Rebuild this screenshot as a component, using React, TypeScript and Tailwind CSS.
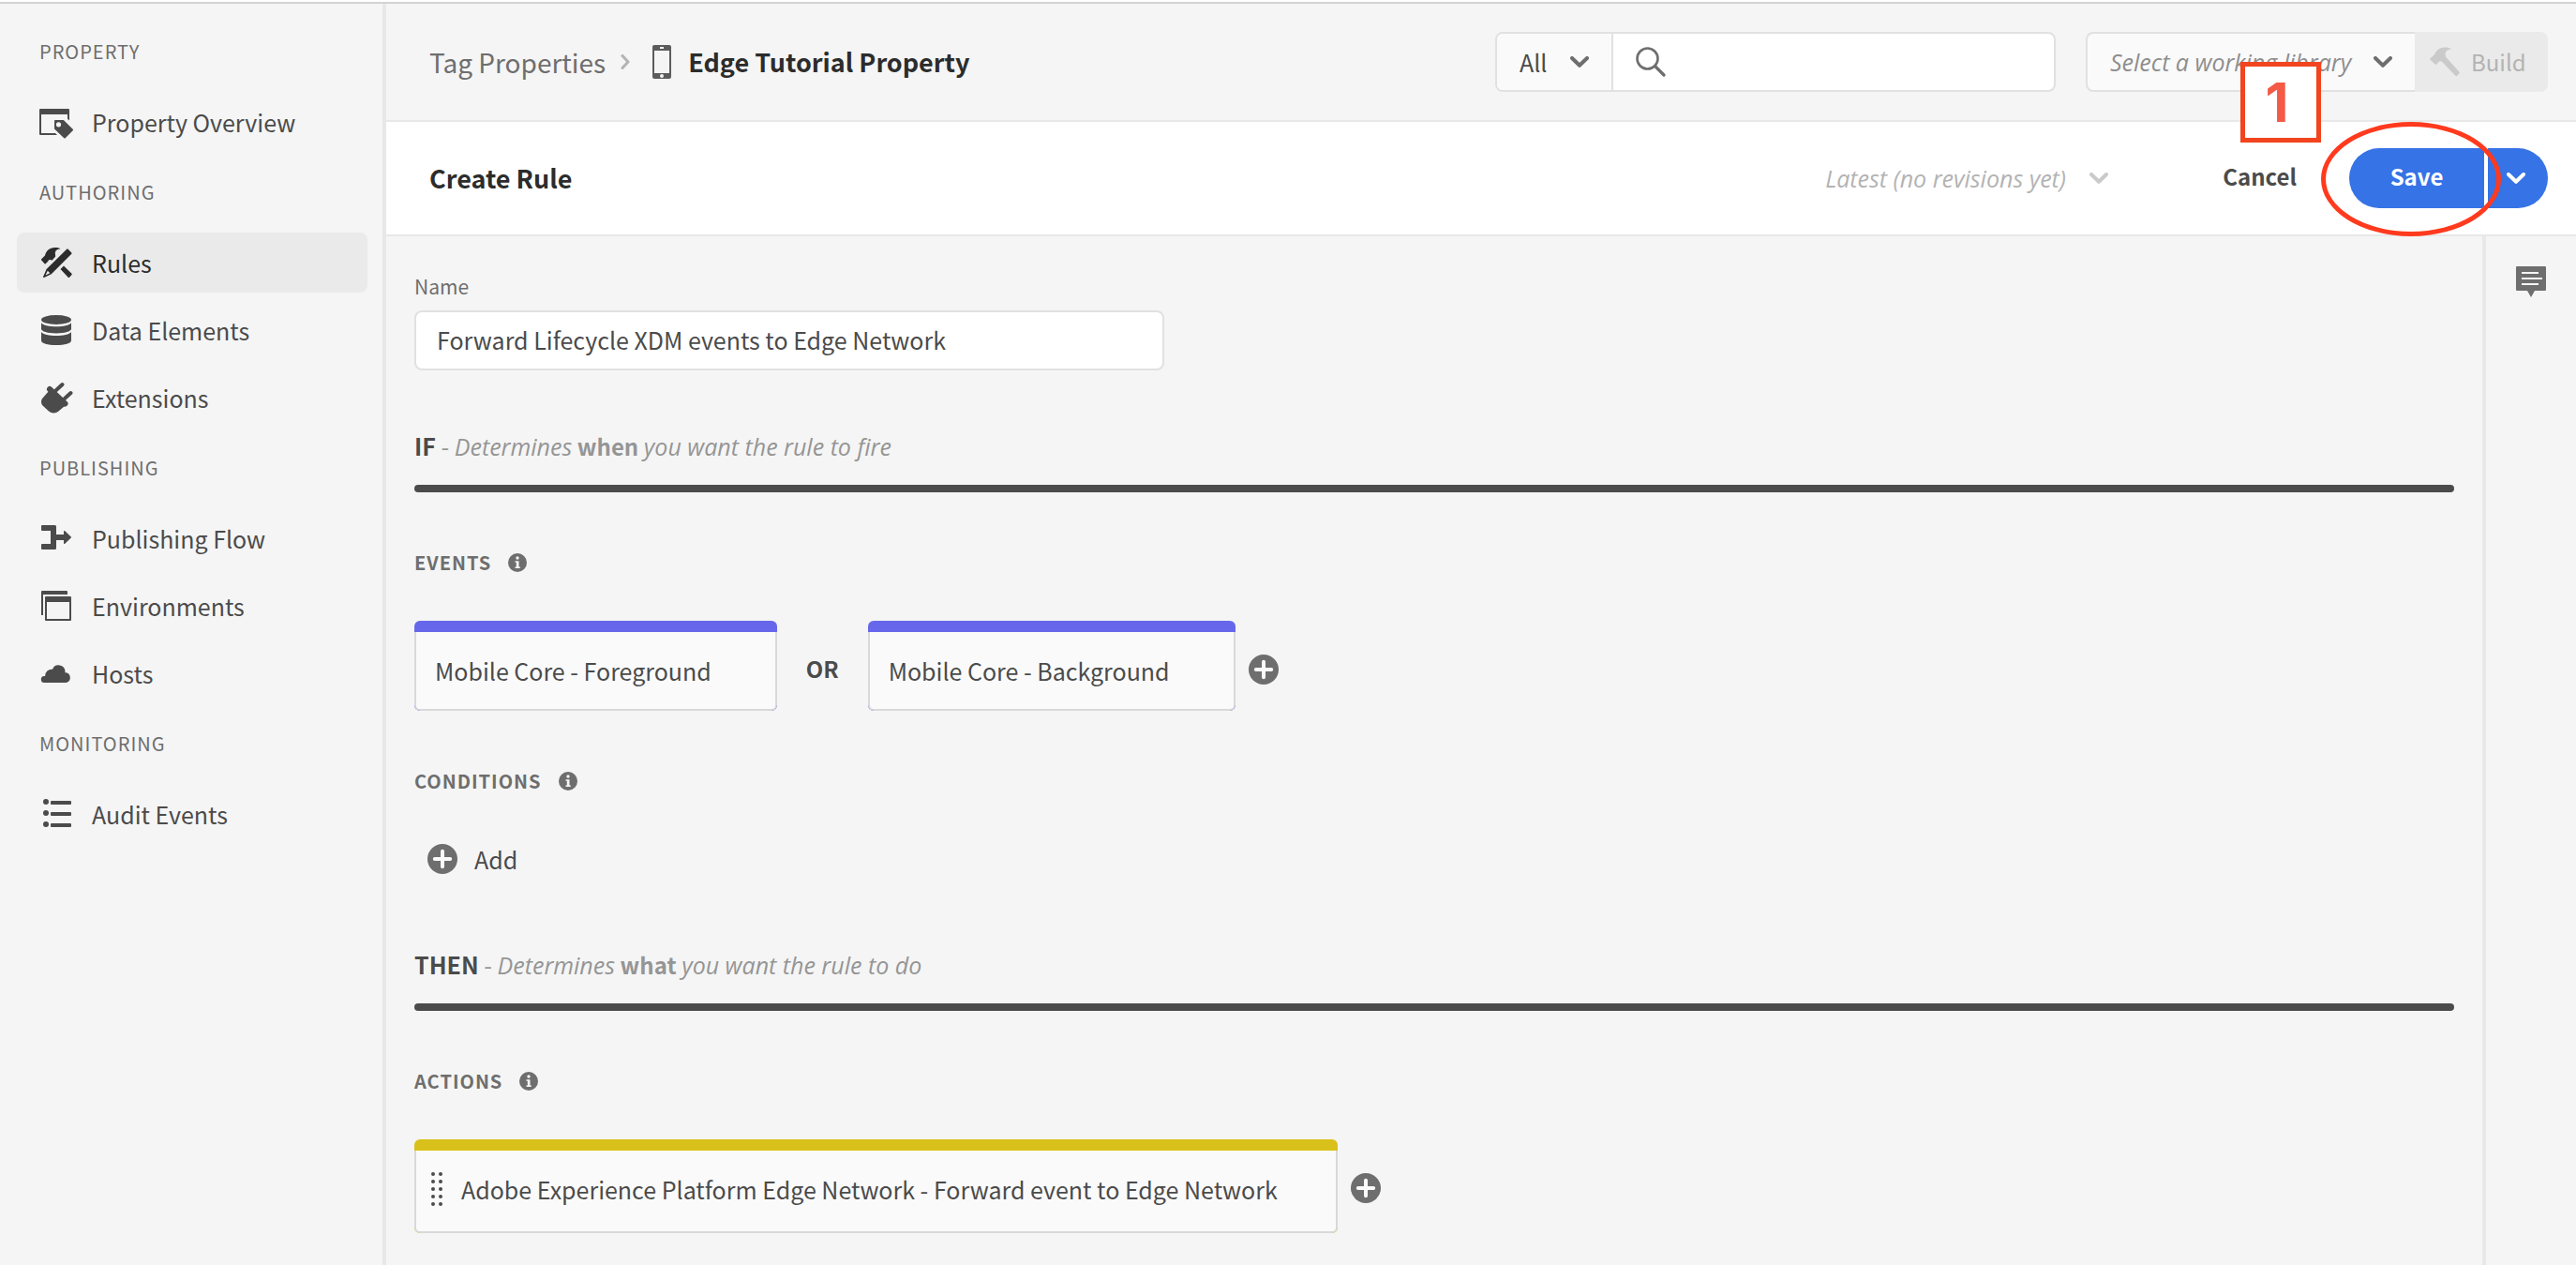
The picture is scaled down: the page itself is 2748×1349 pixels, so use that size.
import type { ReactNode } from "react";

type IconProps = { className?: string };

function Glyph({ className = "size-9", children }: { className?: string; children: ReactNode }) {
  return (
    <svg viewBox="0 0 36 36" className={`shrink-0 ${className}`} fill="currentColor" aria-hidden="true">
      {children}
    </svg>
  );
}

const PropertyIcon = () => (
  <Glyph>
    <path d="M1 4h30a1 1 0 0 1 1 1v11.500l-2-1.800V10H2v20h15l2 2H1a1 1 0 0 1-1-1V5a1 1 0 0 1 1-1z" />
    <path
      fillRule="evenodd"
      d="M17 16h8.400a1 1 0 0 1 .7.300l9.600 9.500a1 1 0 0 1 0 1.400l-8 8a1 1 0 0 1-1.400 0l-10-9.500a1 1 0 0 1-.3-.7V17a1 1 0 0 1 1-1zm3.500 2.200a2.600 2.600 0 1 0 0 5.200 2.600 2.600 0 0 0 0-5.200z"
    />
  </Glyph>
);

const RulesIcon = () => (
  <Glyph>
    <path d="M2.200 14.200 6 10.500C7 6 10.500 2 16.500 2c2.700 0 4.800.3 6 1.300-3 .2-5.500 1.700-5.700 4.400l.4 3.800-3.700 4.200-1.500-.7-2 .2-.6 1.400-2.700 2.700a.8.800 0 0 1-1.100 0l-3.400-3.900a.8.800 0 0 1 0-1.200z" />
    <path d="m26 21.500 8.500 8.200a1 1 0 0 1 0 1.400l-2.400 2.600a1 1 0 0 1-1.400 0l-8.200-8.700z" />
    <path
      fillRule="evenodd"
      d="m30.700 3.800 3.600 3.600a1 1 0 0 1 0 1.400L12.800 30.300 5 33.900a.7.700 0 0 1-.9-.9l3.500-7.900L29.200 3.800a1 1 0 0 1 1.500 0zM8.800 26.700l-2.300 4.800 4.800-2.200z"
    />
  </Glyph>
);

const DataIcon = () => (
  <Glyph>
    <ellipse cx="18" cy="7" rx="16" ry="5" />
    <path d="M2 10.200c2 2.600 8.500 4 16 4s14-1.400 16-4v6.600c0 2.600-7 4.700-16 4.700S2 19.400 2 16.800z" />
    <path d="M2 19.900c2 2.600 8.500 4.100 16 4.100s14-1.500 16-4.100v9.300c0 2.700-7 4.800-16 4.800S2 31.900 2 29.200z" />
  </Glyph>
);

const PlugIcon = () => (
  <Glyph>
    <path d="M10.500 10.500 27 27l-6.500 5.500a8 8 0 0 1-10.500 0L3.500 26.500a6 6 0 0 1 0-8z" />
    <path d="M11 9 27.500 24.500" stroke="currentColor" strokeWidth="6" strokeLinecap="round" />
    <path d="m18 10 6.500-6M27 19l6.500-6" stroke="currentColor" strokeWidth="4" strokeLinecap="round" />
  </Glyph>
);

const FlowIcon = () => (
  <Glyph>
    <path d="M3 4h13.500A1.500 1.500 0 0 1 18 5.500V14h8v-3.200a.8.800 0 0 1 1.300-.6l6.500 6.200a.8.800 0 0 1 0 1.200l-6.500 6.200a.8.800 0 0 1-1.300-.6V20h-8v8.500a1.500 1.500 0 0 1-1.500 1.500H3a1 1 0 0 1-1-1v-4a1 1 0 0 1 1-1h9V10H3a1 1 0 0 1-1-1V5a1 1 0 0 1 1-1z" />
  </Glyph>
);

const EnvironmentsIcon = () => (
  <Glyph>
    <path d="M3 2h26a1 1 0 0 1 1 1v3H4v22H2V3a1 1 0 0 1 1-1z" />
    <path
      fillRule="evenodd"
      d="M7 8h26a1 1 0 0 1 1 1v24a1 1 0 0 1-1 1H7a1 1 0 0 1-1-1V9a1 1 0 0 1 1-1zm1 6v18h24V14z"
    />
  </Glyph>
);

const CloudIcon = () => (
  <Glyph>
    <path d="M5.500 28a3.500 3.500 0 0 1-.4-7h1a7 7 0 0 1 7.900-7.300A7 7 0 0 1 27.500 16v1.200A5.500 5.500 0 0 1 28.800 28z" />
  </Glyph>
);

const AuditIcon = () => (
  <Glyph>
    <circle cx="7" cy="5" r="3" />
    <circle cx="7" cy="17" r="3" />
    <circle cx="7" cy="29" r="3" />
    <rect x="12" y="4" width="22" height="4" rx="1" />
    <rect x="12" y="16" width="22" height="4" rx="1" />
    <rect x="12" y="28" width="22" height="4" rx="1" />
  </Glyph>
);

const PhoneIcon = () => (
  <svg viewBox="0 0 20 36" className="h-9 w-5 shrink-0 text-[#5c5c5c]" fill="currentColor" aria-hidden="true">
    <path
      fillRule="evenodd"
      d="M2 0h16a2 2 0 0 1 2 2v32a2 2 0 0 1-2 2H2a2 2 0 0 1-2-2V2a2 2 0 0 1 2-2zm0 6v24h16V6zm6-4v2h4V2zm2 29a2 2 0 1 0 0 4 2 2 0 0 0 0-4z"
    />
  </svg>
);

const Chevron = ({ className = "" }: IconProps) => (
  <svg viewBox="0 0 20 12" className={`h-3 w-5 shrink-0 ${className}`} fill="none" aria-hidden="true">
    <path d="m2 2 8 7.800L18 2" stroke="currentColor" strokeWidth="4" strokeLinecap="round" strokeLinejoin="round" />
  </svg>
);

const InfoIcon = () => (
  <svg viewBox="0 0 20 20" className="size-5 shrink-0" fill="currentColor" aria-hidden="true">
    <circle cx="10" cy="10" r="10" />
    <g className="fill-[#f5f5f5]">
      <circle cx="10" cy="5" r="1.700" />
      <path d="M7.500 8.200h4v6.200h1.300v1.600H7.500v-1.600h1.300V9.800H7.500z" />
    </g>
  </svg>
);

const PlusIcon = () => (
  <svg viewBox="0 0 32 32" className="size-8 shrink-0 text-[#6e6e6e]" aria-hidden="true">
    <circle cx="16" cy="16" r="16" fill="currentColor" />
    <path d="M16 7.800v16.400M7.800 16h16.400" className="stroke-[#fafafa]" strokeWidth="4" strokeLinecap="round" />
  </svg>
);

const SearchIcon = () => (
  <svg viewBox="0 0 32 32" className="size-8 shrink-0 text-[#6e6e6e]" fill="none" stroke="currentColor" aria-hidden="true">
    <circle cx="12.500" cy="12.500" r="11" strokeWidth="2.600" />
    <path d="m20.500 20.500 9.500 9.500" strokeWidth="3.200" strokeLinecap="round" />
  </svg>
);

const HammerIcon = () => (
  <svg viewBox="0 0 32 32" className="size-8 shrink-0" fill="currentColor" aria-hidden="true">
    <path d="M.3 12.500 5 8.200C7 3.500 10.500.500 16 .500c3 0 5.500.5 7 2-3.500.2-6 1.500-6.500 4.500l.4 3.500 14.600 16.200a1.200 1.200 0 0 1 0 1.600l-2.400 2.400a1.200 1.200 0 0 1-1.700 0L12.800 15.500l-2.600-.3-1 1.300-2.200 2.300a.8.800 0 0 1-1.200 0L.3 13.600a.8.800 0 0 1 0-1.100z" />
  </svg>
);

const CommentIcon = () => (
  <svg viewBox="0 0 32 34" className="h-[34px] w-8 text-[#6e6e6e]" fill="currentColor" aria-hidden="true">
    <path d="M1 0h30a1 1 0 0 1 1 1v24a1 1 0 0 1-1 1H20l-4 7-4-7H1a1 1 0 0 1-1-1V1a1 1 0 0 1 1-1z" />
    <path d="M6 7h18M6 13h22M6 19h18" className="stroke-[#f5f5f5]" strokeWidth="2" />
  </svg>
);

const GripIcon = () => (
  <svg viewBox="0 0 12 36" className="h-9 w-3 shrink-0 text-[#4b4b4b]" fill="currentColor" aria-hidden="true">
    {[2, 10, 18, 26, 34].map((y) => (
      <g key={y}>
        <circle cx="2" cy={y} r="2" />
        <circle cx="10" cy={y} r="2" />
      </g>
    ))}
  </svg>
);

const navigation: { title: string; items: { label: string; icon: ReactNode; active?: boolean }[] }[] = [
  { title: "PROPERTY", items: [{ label: "Property Overview", icon: <PropertyIcon /> }] },
  {
    title: "AUTHORING",
    items: [
      { label: "Rules", icon: <RulesIcon />, active: true },
      { label: "Data Elements", icon: <DataIcon /> },
      { label: "Extensions", icon: <PlugIcon /> },
    ],
  },
  {
    title: "PUBLISHING",
    items: [
      { label: "Publishing Flow", icon: <FlowIcon /> },
      { label: "Environments", icon: <EnvironmentsIcon /> },
      { label: "Hosts", icon: <CloudIcon /> },
    ],
  },
  { title: "MONITORING", items: [{ label: "Audit Events", icon: <AuditIcon /> }] },
];

function Sidebar() {
  return (
    <nav aria-label="Property" className="w-[412px] shrink-0 border-r-4 border-[#e8e8e8] pt-2 pr-4 pl-[18px]">
      {navigation.map((group) => (
        <section key={group.title}>
          <h2 className="flex h-[86px] items-center pl-6 text-[20px] tracking-wider text-[#6e6e6e]">{group.title}</h2>
          <ul className="flex flex-col gap-2">
            {group.items.map((item) => (
              <li key={item.label}>
                <a
                  href="#"
                  aria-current={item.active ? "page" : undefined}
                  className={
                    item.active
                      ? "flex h-16 items-center gap-5 rounded-lg bg-[#eaeaea] pl-6 text-[#2c2c2c]"
                      : "flex h-16 items-center gap-5 rounded-lg pl-6 text-[#4b4b4b]"
                  }
                >
                  {item.icon}
                  {item.label}
                </a>
              </li>
            ))}
          </ul>
        </section>
      ))}
    </nav>
  );
}

function TopBar() {
  return (
    <header className="flex h-[126px] items-center border-b-2 border-[#e8e8e8] pr-[30px] pl-[46px]">
      <div className="flex items-center text-[28px]">
        <a href="#" className="text-[#6e6e6e]">
          Tag Properties
        </a>
        <svg viewBox="0 0 10 16" className="mr-6 ml-4 h-4 w-2.5 text-[#b3b3b3]" fill="none" aria-hidden="true">
          <path d="m2 1.500 6 6.500-6 6.500" stroke="currentColor" strokeWidth="3" strokeLinecap="round" strokeLinejoin="round" />
        </svg>
        <PhoneIcon />
        <span className="ml-[18px] text-[27px] font-bold text-[#2c2c2c]">Edge Tutorial Property</span>
      </div>
      <div className="ml-auto flex h-16 w-[598px] overflow-hidden rounded-lg border-2 border-[#e1e1e1] bg-white">
        <div className="relative w-[124px] border-r-2 border-[#e1e1e1] bg-[#fafafa]">
          <select aria-label="Search scope" className="size-full appearance-none pl-6 text-[#4b4b4b]">
            <option>All</option>
          </select>
          <Chevron className="pointer-events-none absolute top-6 right-6 text-[#6e6e6e]" />
        </div>
        <label className="flex flex-1 items-center gap-3 pl-6">
          <SearchIcon />
          <input type="search" aria-label="Search" className="h-full min-w-0 flex-1 outline-none" />
        </label>
      </div>
      <div className="ml-8 flex h-16">
        <div className="relative w-[351px] rounded-l-lg border-2 border-r-0 border-[#e1e1e1] bg-[#fafafa]">
          <select
            aria-label="Working library"
            className="size-full appearance-none pl-6 font-['Open_Sans',sans-serif] text-[#8e8e8e] italic"
          >
            <option>Select a working library</option>
          </select>
          <Chevron className="pointer-events-none absolute top-6 right-6 text-[#6e6e6e]" />
        </div>
        <button
          type="button"
          disabled
          className="flex w-[142px] items-center gap-3 rounded-r-lg bg-[#eaeaea] pl-4 text-[24px] text-[#b3b3b3]"
        >
          <span className="text-[#cacaca]">
            <HammerIcon />
          </span>
          Build
        </button>
      </div>
    </header>
  );
}

function RuleBar() {
  return (
    <div className="relative flex h-[122px] items-center border-b-2 border-[#e8e8e8] bg-white pr-[30px] pl-[46px]">
      <h1 className="text-[27px] font-bold text-[#2c2c2c]">Create Rule</h1>
      <div className="relative ml-auto w-[302px]">
        <select
          aria-label="Revision"
          className="block h-16 w-full appearance-none font-['Open_Sans',sans-serif] text-[#b3b3b3] italic"
        >
          <option>Latest (no revisions yet)</option>
        </select>
        <Chevron className="pointer-events-none absolute top-[26px] right-0 text-[#cacaca]" />
      </div>
      <button type="button" className="mr-14 ml-[122px] h-16 pb-1 text-[24px] font-bold text-[#4b4b4b]">
        Cancel
      </button>
      <div className="flex h-16 gap-1 text-white">
        <button type="button" className="w-36 rounded-l-full bg-[#3573e6] pb-1 text-[24px] font-bold">
          Save
        </button>
        <button
          type="button"
          aria-label="More save options"
          className="flex w-16 items-center justify-center rounded-r-full bg-[#3573e6] pr-1"
        >
          <Chevron />
        </button>
      </div>
      <div className="pointer-events-none absolute top-0 right-20 h-[122px] w-[192px] rounded-[50%] border-[5px] border-[#ff3a1e]" />
      <div className="pointer-events-none absolute top-[-64px] right-[272px] flex h-[86px] w-[86px] items-center justify-center border-[5px] border-[#f2441e] bg-white pr-2 font-['Inter',sans-serif] text-[58px] font-bold text-[#f45a46]">
        1
      </div>
    </div>
  );
}

function ClauseHeading({ keyword, emphasis, rest }: { keyword: string; emphasis: string; rest: string }) {
  return (
    <div className="mb-[60px]">
      <h2 className="h-9 leading-9 text-[#959595]">
        <b className="text-[#4b4b4b]">{keyword}</b> - <em className="font-['Open_Sans',sans-serif]">Determines</em>{" "}
        <b className="text-[24px]">{emphasis}</b> <em className="font-['Open_Sans',sans-serif]">{rest}</em>
      </h2>
      <div className="mt-6 h-2 rounded bg-[#4b4b4b]" />
    </div>
  );
}

function GroupHeading({ children }: { children: ReactNode }) {
  return (
    <h3 className="flex items-center gap-[18px] text-[20px] leading-[30px] font-bold tracking-wider text-[#6e6e6e]">
      {children}
      <InfoIcon />
    </h3>
  );
}

function AddButton({ label }: { label: string }) {
  return (
    <button type="button" aria-label={label} className="mt-9 ml-3.5 self-start">
      <PlusIcon />
    </button>
  );
}

function EventCard({ children }: { children: ReactNode }) {
  return (
    <button type="button" className="flex h-24 flex-col overflow-hidden rounded-md bg-[#6767ec] pt-3 text-left">
      <span className="flex flex-1 items-center rounded-b-md border-2 border-t-0 border-[#d9d9d9] bg-[#fafafa] pr-[68px] pl-5">
        {children}
      </span>
    </button>
  );
}

function RuleEditor() {
  return (
    <main className="flex-1 px-[30px] pt-[38px]">
      <label htmlFor="rule-name" className="block text-[21px] leading-[30px] text-[#6e6e6e]">
        Name
      </label>
      <input
        id="rule-name"
        defaultValue="Forward Lifecycle XDM events to Edge Network"
        className="mt-[11px] mb-[62px] block h-16 w-[800px] rounded-lg border-2 border-[#e1e1e1] bg-white px-[22px] pb-0.5"
      />

      <ClauseHeading keyword="IF" emphasis="when" rest="you want the rule to fire" />

      <GroupHeading>EVENTS</GroupHeading>
      <div className="mt-[47px] mb-[60px] flex items-center">
        <EventCard>Mobile Core - Foreground</EventCard>
        <b className="px-[31px] pt-1.5 text-[24px]">OR</b>
        <EventCard>Mobile Core - Background</EventCard>
        <AddButton label="Add event" />
      </div>

      <GroupHeading>CONDITIONS</GroupHeading>
      <button type="button" className="mt-[50px] mb-[76px] ml-3.5 flex h-9 items-center gap-[18px]">
        <PlusIcon />
        Add
      </button>

      <ClauseHeading keyword="THEN" emphasis="what" rest="you want the rule to do" />

      <GroupHeading>ACTIONS</GroupHeading>
      <div className="mt-[47px] flex items-center">
        <button type="button" className="flex h-[100px] flex-col overflow-hidden rounded-md bg-[#dac01b] pt-3 text-left">
          <span className="flex flex-1 items-center gap-5 rounded-b-md border-2 border-t-0 border-[#d9d9d9] bg-[#fafafa] pr-[62px] pb-1 pl-4">
            <GripIcon />
            Adobe Experience Platform Edge Network - Forward event to Edge Network
          </span>
        </button>
        <AddButton label="Add action" />
      </div>
    </main>
  );
}

export default function App() {
  return (
    <div className="flex min-h-screen flex-col bg-[#f5f5f5] font-['Noto_Sans_CJK_JP','Noto_Sans',sans-serif] text-[25px] leading-9 text-[#4b4b4b]">
      <div className="h-1 border-b-2 border-[#d3d3d3] bg-white" />
      <div className="flex flex-1">
        <Sidebar />
        <div className="flex min-w-0 flex-1 flex-col">
          <TopBar />
          <RuleBar />
          <div className="flex flex-1">
            <RuleEditor />
            <aside className="flex w-[100px] shrink-0 justify-center border-l-4 border-[#e8e8e8]">
              <button type="button" aria-label="Notes" className="mt-8 self-start">
                <CommentIcon />
              </button>
            </aside>
          </div>
        </div>
      </div>
    </div>
  );
}
